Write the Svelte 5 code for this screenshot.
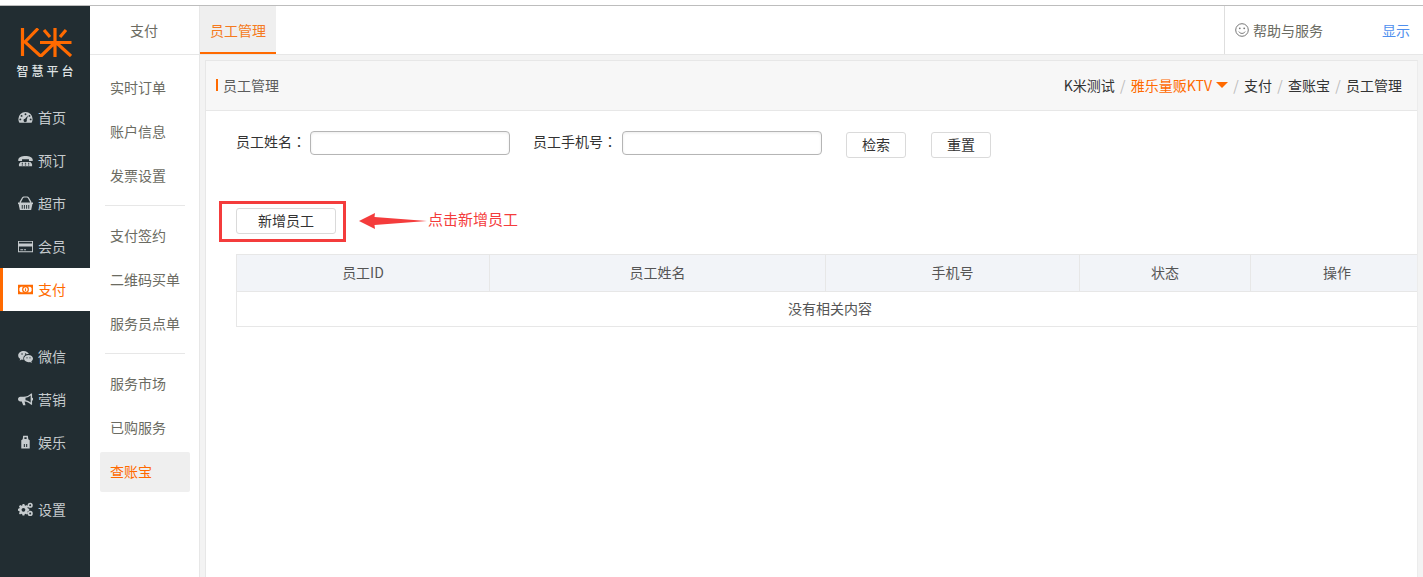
<script>
  const groups = [
    [{ k: 'gauge', t: '首页' }, { k: 'phone', t: '预订' }, { k: 'basket', t: '超市' }, { k: 'card', t: '会员' }, { k: 'money', t: '支付', on: true }],
    [{ k: 'wechat', t: '微信' }, { k: 'horn', t: '营销' }, { k: 'bag', t: '娱乐' }],
    [{ k: 'cogs', t: '设置' }]
  ];
  const sub = [
    [{ t: '实时订单' }, { t: '账户信息' }, { t: '发票设置' }],
    [{ t: '支付签约' }, { t: '二维码买单' }, { t: '服务员点单' }],
    [{ t: '服务市场' }, { t: '已购服务' }, { t: '查账宝', on: true }]
  ];
  const cols = [
    { t: '员工ID', w: 253 }, { t: '员工姓名', w: 336 }, { t: '手机号', w: 254 }, { t: '状态', w: 171 }, { t: '操作', w: 173 }
  ];
</script>

{#snippet icon(k)}
  <svg class="ico" viewBox="0 0 16 16" aria-hidden="true">
    {#if k === 'gauge'}
      <path fill="currentColor" fill-rule="evenodd" d="M8 2a7.6 7.6 0 0 1 7.6 7.6c0 1.5-.4 2.9-1.1 4.1H1.500A7.600 7.600 0 0 1 .4 9.600 7.600 7.600 0 0 1 8 2zM8 3.500a1 1 0 1 0 0 2 1 1 0 0 0 0-2zM3.800 5.300a1 1 0 1 0 0 2 1 1 0 0 0 0-2zM12.200 5.300a1 1 0 1 0 0 2 1 1 0 0 0 0-2zM2.500 9a1 1 0 1 0 0 2 1 1 0 0 0 0-2zM13.500 9a1 1 0 1 0 0 2 1 1 0 0 0 0-2zM10.700 5.800 7.500 9.300a1.800 1.800 0 1 0 1.800 1z"/>
    {:else if k === 'phone'}
      <path fill="currentColor" fill-rule="evenodd" d="M.3 7.200C.3 4.700 4 3.200 8 3.200s7.700 1.500 7.700 4v1.300h-4V6.700H4.300v1.800h-4zM2.800 9.500h10.400l1.800 2.200v2.500H1v-2.500zM4 10.500v1h1.300v-1zM7.300 10.500v1h1.400v-1zM10.700 10.500v1H12v-1zM4 12.300v1h1.300v-1zM7.300 12.300v1h1.400v-1zM10.700 12.300v1H12v-1z"/>
    {:else if k === 'basket'}
      <path fill="currentColor" fill-rule="evenodd" d="M3 7 5.200 2.600C5.600 1.800 6.300 1.500 7 1.500h2c.7 0 1.400.3 1.800 1.100L13 7h1.200l.0-1.100L12 2C11.400 1 10.300.5 9 .5H7C5.700.5 4.600 1 4 2L1.800 5.900V7zM0 7h16v1.500h-.6L14 15H2L.6 8.500H0zM4 9.500v4h1v-4zM6.300 9.500v4h1v-4zM8.700 9.500v4h1v-4zM11 9.500v4h1v-4z"/>
    {:else if k === 'card'}
      <path fill="currentColor" fill-rule="evenodd" d="M0 2h16v12H0zM1 3v1.800h14V3zM1 8v5h14V8zM2.500 11h3v1h-3zM6.500 11h2v1h-2z"/>
    {:else if k === 'money'}
      <path fill="currentColor" fill-rule="evenodd" d="M0 3h16v10H0zM3 5 1.500 6.500v3L3 11h10l1.500-1.500v-3L13 5z"/>
      <circle cx="8" cy="8" r="3" fill="none" stroke="currentColor" stroke-width="1.300"/>
      <path fill="currentColor" d="M7.400 6.800h1.200v2.700H7.400z"/>
    {:else if k === 'wechat'}
      <path fill="currentColor" fill-rule="evenodd" d="M6.200 2C2.900 2 .2 4.100.2 6.800c0 1.500.8 2.800 2.200 3.700L1.800 12.300l2.200-1.100c.6.200 1.300.3 2 .3-.2-.5-.3-1-.3-1.500 0-2.600 2.500-4.600 5.500-4.600h.4C11 3.600 8.800 2 6.200 2zM4.300 4.600a.8.8 0 1 1 0 1.600.8.8 0 0 1 0-1.600zM8.100 4.600a.8.8 0 1 1 0 1.600.8.8 0 0 1 0-1.600z"/>
      <path fill="currentColor" fill-rule="evenodd" d="M11.200 6.400c-2.700 0-4.800 1.700-4.800 3.800S8.500 14 11.200 14c.6 0 1.100-.1 1.600-.2l1.900 1-.5-1.600c1.100-.7 1.800-1.800 1.800-3 0-2.100-2.100-3.800-4.800-3.800zM9.600 8.700a.7.7 0 1 1 0 1.400.7.7 0 0 1 0-1.400zM12.800 8.700a.7.7 0 1 1 0 1.400.7.7 0 0 1 0-1.400z"/>
    {:else if k === 'horn'}
      <path fill="currentColor" fill-rule="evenodd" d="M14 1.500h1V6a1.500 1.500 0 0 1 0 3v4.500h-1c-2-1.900-4.400-3-7-3.300l1 3.800H5.500L4 10H2.500C1.100 10 0 8.900 0 7.500S1.100 5 2.500 5H6c3 0 6-1.400 8-3.500zM13.500 3.800C12 5 10 5.800 8 6.200v2.700c2 .3 4 1.100 5.500 2.300z"/>
    {:else if k === 'bag'}
      <path fill="currentColor" fill-rule="evenodd" d="M5.500.8h5l.5 3.700 1.500 1v9H3.500v-9l1.500-1zM6.800 2.300v2h2.400v-2zM6.200 9.500v3.200h1.100V9.500zM8.700 9.500v3.200h1.100V9.500z"/>
    {:else if k === 'cogs'}
      <path fill="currentColor" fill-rule="evenodd" d="M4.800 3.500h2l.3 1.500 1.100.5 1.300-.8 1.400 1.400-.8 1.300.5 1.100 1.400.3v2l-1.400.3-.5 1.100.8 1.300-1.400 1.400-1.300-.8-1.100.5-.3 1.400h-2l-.3-1.400-1.100-.5-1.300.8L1 13.500l.8-1.300-.5-1.100-1.300-.3v-2l1.300-.3.5-1.100L1 6.100l1.400-1.400 1.300.8L4.800 5zM5.800 7.800a2 2 0 1 0 0 4 2 2 0 0 0 0-4z" transform="translate(0 -1.500)"/>
      <circle cx="13" cy="3.500" r="1.900" fill="none" stroke="currentColor" stroke-width="1.700"/>
      <circle cx="13" cy="12.200" r="1.900" fill="none" stroke="currentColor" stroke-width="1.700"/>
    {/if}
  </svg>
{/snippet}

<div class="shell">
  <aside class="rail">
    <div class="brand">
      <svg class="logo" viewBox="0 0 52 29" aria-hidden="true">
        <path fill="none" stroke="#ff6a00" stroke-width="3.200" d="M2.500 0v28M18 .5 5 14l16 14.500M20 29 35.500 14M24 2l6 7M46 2l-6 7M20 14.500h31.500M35 0v29M35.500 14 51 28"/>
      </svg>
      <div class="brand-name">智慧平台</div>
    </div>
    {#each groups as g}
      <nav class="rail-group">
        {#each g as item}
          <div class="rail-item" class:on={item.on}>
            {@render icon(item.k)}<span>{item.t}</span>
          </div>
        {/each}
      </nav>
    {/each}
  </aside>

  <aside class="side">
    <div class="side-head">支付</div>
    {#each sub as g, i}
      {#if i > 0}<div class="side-rule"></div>{/if}
      <div class="side-group">
        {#each g as item}
          <div class="side-item" class:on={item.on}>{item.t}</div>
        {/each}
      </div>
    {/each}
  </aside>

  <main class="main">
    <header class="topbar">
      <div class="tab">员工管理</div>
      <div class="help">
        <svg class="smile" viewBox="0 0 14 14" aria-hidden="true">
          <circle cx="7" cy="7" r="6.300" fill="none" stroke="#777" stroke-width="1"/>
          <circle cx="4.800" cy="5.300" r=".9" fill="#777"/>
          <circle cx="9.200" cy="5.300" r=".9" fill="#777"/>
          <path d="M3.800 8.600c.8 1.200 1.900 1.800 3.200 1.800s2.400-.6 3.200-1.800" fill="none" stroke="#777"/>
        </svg>
        <span>帮助与服务</span>
      </div>
      <a class="show" href="#top">显示</a>
    </header>

    <section class="panel">
      <div class="panel-head">
        <h1>员工管理</h1>
        <div class="crumbs">
          <span>K米测试</span><i>/</i>
          <span class="cur">雅乐量贩KTV<b class="caret"></b></span><i>/</i>
          <span>支付</span><i>/</i>
          <span>查账宝</span><i>/</i>
          <span>员工管理</span>
        </div>
      </div>

      <div class="panel-body">
        <form class="filters">
          <label class="f1"><span>员工姓名<em>：</em></span><input type="text" /></label>
          <label class="f2"><span>员工手机号<em>：</em></span><input type="text" /></label>
          <button type="button" class="btn b1">检索</button>
          <button type="button" class="btn b2">重置</button>
        </form>

        <div class="actions">
          <button type="button" class="btn add">新增员工</button>
          <div class="mark-box"></div>
          <svg class="mark-arrow" viewBox="0 0 68 18" aria-hidden="true">
            <path fill="#f43c3c" d="M0 9 16 1l-.5 4L68 9l-52.500 4 .5 4z"/>
          </svg>
          <span class="mark-text">点击新增员工</span>
        </div>

        <table>
          <colgroup>
            {#each cols as c}<col style="width:{c.w}px" />{/each}
          </colgroup>
          <thead>
            <tr>{#each cols as c}<th>{c.t}</th>{/each}</tr>
          </thead>
          <tbody>
            <tr><td colspan="5">没有相关内容</td></tr>
          </tbody>
        </table>
      </div>
    </section>
  </main>
</div>

<style>
  :global(body) {
    margin: 0;
    background: #fff;
    font-family: "Microsoft YaHei", "Noto Sans CJK SC", "Liberation Sans", sans-serif;
  }
  .shell {
    margin-top: 5px;
    border-top: 1px solid #bdbdbd;
    height: 571px;
    display: flex;
    overflow: hidden;
    font-size: 14px;
    line-height: 20px;
  }
  .rail {
    width: 90px;
    flex: none;
    background: #222d32;
    color: #c6cbce;
  }
  .brand {
    height: 90px;
    box-sizing: border-box;
    padding: 22px 0 0 2px;
    text-align: center;
  }
  .logo {
    display: block;
    width: 52px;
    height: 29px;
    margin: 0 auto;
  }
  .brand-name {
    margin: 6px 0 0 -2px;
    font-size: 12px;
    line-height: 16px;
    font-weight: 500;
    letter-spacing: 3px;
    padding-left: 3px;
    color: #dfe2e3;
  }
  .rail-group { margin-bottom: 24px; }
  .rail-item {
    height: 43px;
    display: flex;
    align-items: center;
    padding-left: 18px;
    gap: 5px;
    box-sizing: border-box;
  }
  .rail-item span { margin-bottom: 2px; }
  .rail-item.on {
    background: #fff;
    color: #ff6a00;
    border-left: 3px solid #ff6a00;
    padding-left: 15px;
  }
  .ico {
    width: 15px;
    height: 15px;
    flex: none;
  }
  .side {
    width: 109px;
    flex: none;
    background: #fff;
    color: #6b6b62;
  }
  .side-head {
    height: 48px;
    line-height: 48px;
    border-bottom: 1px solid #e7e7e7;
    text-align: center;
    margin-bottom: 13px;
    padding-right: 1px;
  }
  .side-group {
    display: flex;
    flex-direction: column;
    gap: 4px;
    padding: 0 9px 0 10px;
  }
  .side-item {
    height: 40px;
    line-height: 38px;
    padding-left: 10px;
    border-radius: 2px;
    white-space: nowrap;
  }
  .side-item.on {
    background: #efefef;
    color: #ff6a00;
  }
  .side-rule {
    height: 1px;
    background: #e7e7e7;
    margin: 9px 14px 10px 15px;
  }
  .main {
    flex: 1;
    min-width: 0;
    background: #f3f3f3;
    display: flex;
    flex-direction: column;
    border-left: 1px solid #e7e7e7;
  }
  .topbar {
    height: 48px;
    flex: none;
    display: flex;
    align-items: stretch;
    background: #fff;
    border-bottom: 1px solid #e7e7e7;
  }
  .tab {
    width: 76px;
    box-sizing: border-box;
    background: #efefef;
    border-bottom: 2px solid #ff6a00;
    color: #f57a20;
    text-align: center;
    line-height: 49px;
  }
  .help {
    margin-left: auto;
    width: 158px;
    box-sizing: border-box;
    border-left: 1px solid #dedede;
    padding-left: 10px;
    display: flex;
    align-items: center;
    gap: 4px;
    color: #6b6b62;
  }
  .smile { width: 14px; height: 14px; flex: none; }
  .show {
    width: 41px;
    flex: none;
    color: #4f8fee;
    text-decoration: none;
    line-height: 49px;
  }
  .panel {
    flex: 1;
    min-height: 0;
    margin: 5px 5px 0 5px;
    background: #fff;
    border: 1px solid #e7e7e7;
    border-bottom: 0;
    border-right: 1px solid #ececec;
    overflow: hidden;
  }
  .panel-head {
    height: 47px;
    padding: 0 15px 2px 10px;
    background: #f7f7f7;
    border-bottom: 1px solid #e7e7e7;
    display: flex;
    align-items: center;
    justify-content: space-between;
  }
  h1 {
    margin: 0;
    font-size: 14px;
    font-weight: 400;
    line-height: 12px;
    color: #5c5c5c;
    border-left: 2px solid #ff6a00;
    padding-left: 5px;
  }
  .crumbs {
    display: flex;
    align-items: center;
    color: #333;
  }
  .crumbs i {
    font-style: normal;
    color: #bbb;
    width: 16px;
    text-align: center;
  }
  .cur { color: #ff6a00; display: flex; align-items: center; }
  .caret {
    width: 0;
    height: 0;
    margin-left: 4px;
    border: 6px solid transparent;
    border-top: 6px solid #ff6a00;
    border-bottom: 0;
  }
  .panel-body {
    padding: 20px 0 0 30px;
  }
  .filters {
    display: flex;
    align-items: flex-start;
    height: 27px;
    color: #333;
  }
  label {
    display: flex;
    align-items: center;
    height: 24px;
  }
  label span {
    white-space: nowrap;
    padding-bottom: 5px;
  }
  label em {
    font-style: normal;
    font-family: "Noto Sans CJK TC", sans-serif;
  }
  .f1 span { width: 74px; }
  .f2 { margin-left: 23px; }
  .f2 span { width: 89px; }
  input {
    width: 200px;
    height: 24px;
    box-sizing: border-box;
    border: 1px solid #b5b5b5;
    border-radius: 4px;
    box-shadow: inset 0 1px 3px rgba(0, 0, 0, 0.08);
    background: #fff;
    padding: 0;
  }
  .btn {
    height: 26px;
    box-sizing: border-box;
    border: 1px solid #dadada;
    border-radius: 3px;
    background: #fff;
    color: #333;
    font: inherit;
    padding: 0 0 2px;
  }
  .b1 { width: 60px; margin: 1px 0 0 24px; }
  .b2 { width: 60px; margin: 1px 0 0 25px; }
  .actions {
    position: relative;
    height: 26px;
    margin-top: 50px;
  }
  .add { width: 100px; }
  .mark-box {
    position: absolute;
    left: -17px;
    top: -7px;
    width: 127px;
    height: 41px;
    box-sizing: border-box;
    border: 3px solid #f43c3c;
  }
  .mark-arrow {
    position: absolute;
    left: 123px;
    top: 4px;
    width: 68px;
    height: 18px;
  }
  .mark-text {
    position: absolute;
    left: 192px;
    top: 1px;
    font-size: 15px;
    color: #f43c3c;
    white-space: nowrap;
  }
  table {
    margin-top: 20px;
    width: 1187px;
    table-layout: fixed;
    border-collapse: collapse;
    color: #555;
  }
  th {
    height: 37px;
    padding: 0 0 2px;
    box-sizing: border-box;
    background: #f2f4f8;
    border: 1px solid #e7e7e7;
    font-weight: 400;
  }
  td {
    height: 35px;
    padding: 0 0 2px;
    box-sizing: border-box;
    border: 1px solid #e7e7e7;
    text-align: center;
  }
</style>
